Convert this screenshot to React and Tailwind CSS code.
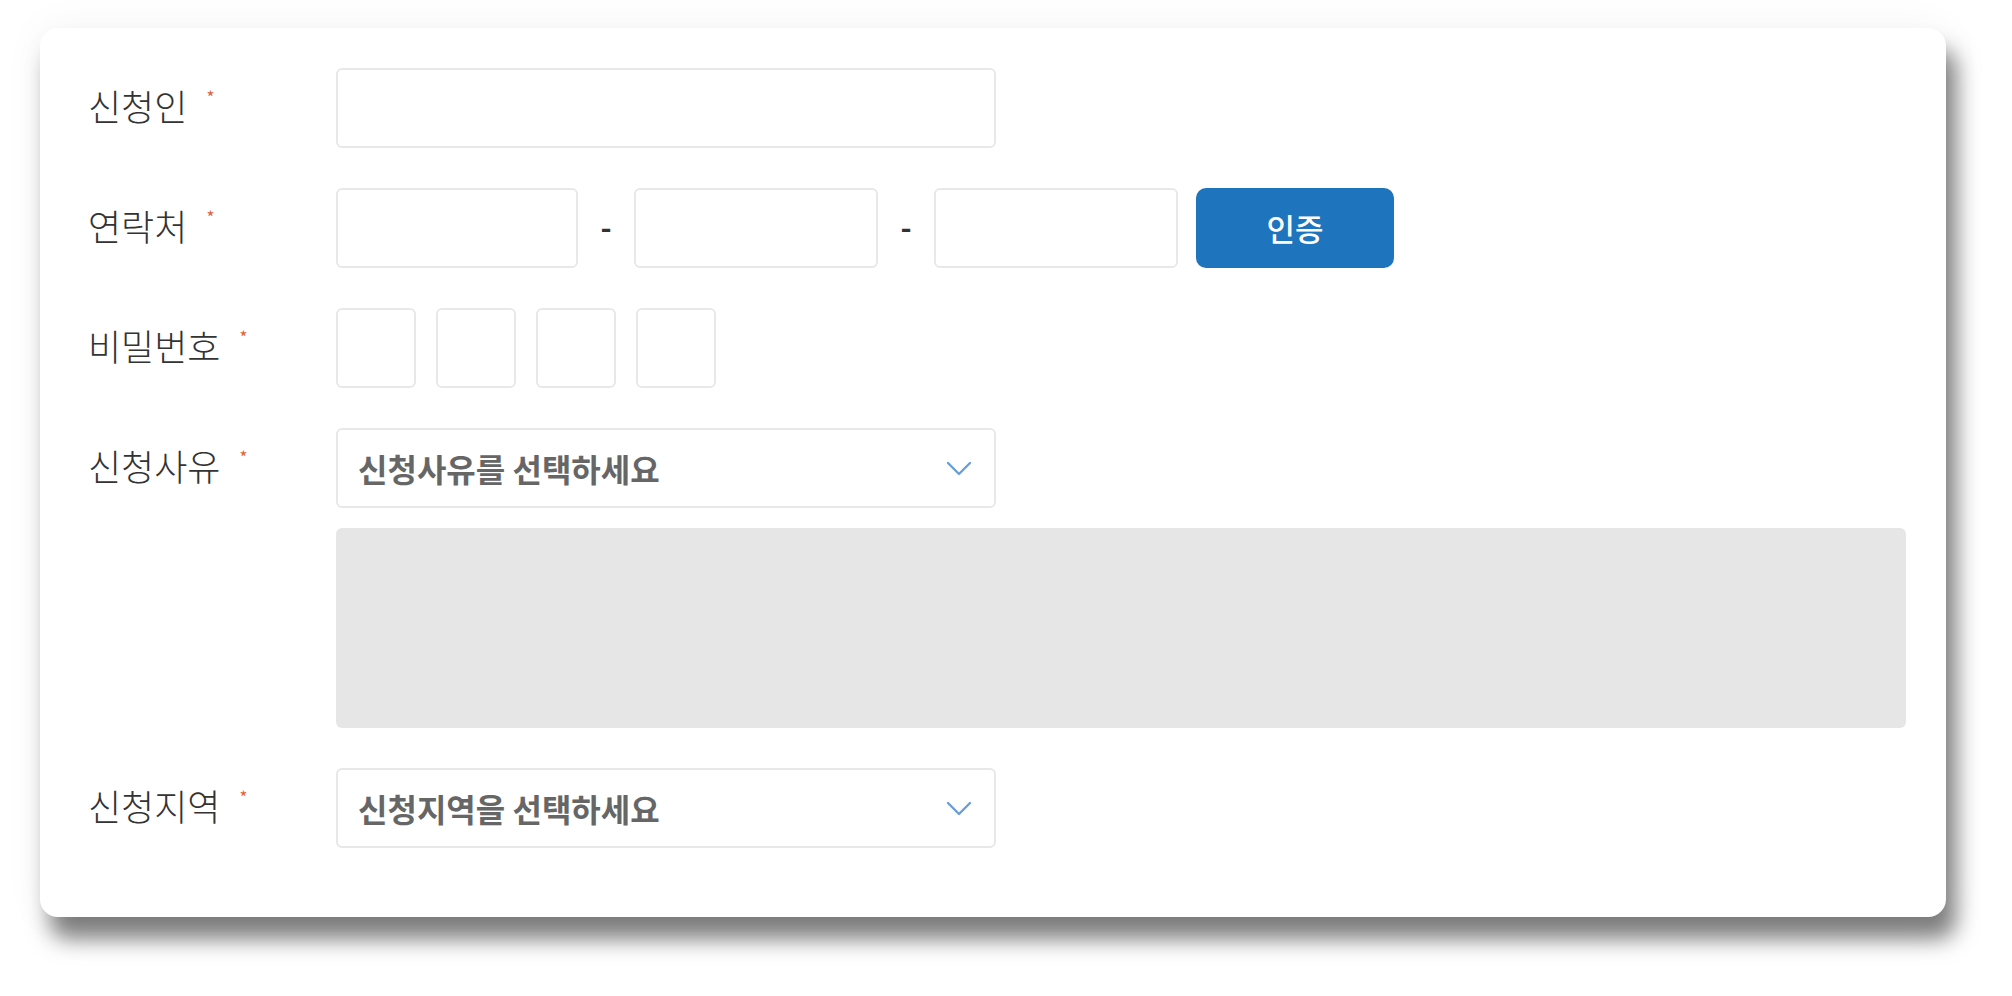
import React from 'react';

const inputCls = 'h-[80px] border-2 border-[#e8e8e8] rounded-[6px] bg-white outline-none';

function Label({ text }) {
  return (
    <div className="w-[248px] h-[80px] flex items-center pb-[6px] shrink-0">
      <span className="text-[36px] font-extralight text-[#333] leading-none">{text}</span>
      <span className="ml-[19px] self-start mt-[20px] text-[17px] leading-none text-[#e4613d]">*</span>
    </div>
  );
}

function Chevron() {
  return (
    <svg width="26" height="17" viewBox="0 0 26 17" fill="none">
      <polyline points="2,3 13,14 24,3" stroke="#6a9fd6" strokeWidth="2.4" strokeLinecap="round" strokeLinejoin="round" />
    </svg>
  );
}

function Select({ placeholder }) {
  return (
    <div className="w-[660px] h-[80px] border-2 border-[#e8e8e8] rounded-[6px] bg-white flex items-center justify-between pl-[20px] pr-[22px]">
      <span className="text-[32px] font-bold text-[#666] leading-none">{placeholder}</span>
      <Chevron />
    </div>
  );
}

export default function App() {
  return (
    <div className="min-h-[996px] bg-white pt-[28px] pl-[40px] font-['Noto_Sans_CJK_KR','Noto_Sans',sans-serif]">
      <div className="w-[1906px] bg-white rounded-[18px] shadow-[10px_22px_22px_rgba(0,0,0,0.5),0_0_40px_rgba(0,0,0,0.05)] pt-[40px] pb-[69px] pl-[48px] pr-[40px] flex flex-col">
        {/* 신청인 */}
        <div className="flex">
          <Label text="신청인" />
          <input className={`${inputCls} w-[660px]`} />
        </div>

        {/* 연락처 */}
        <div className="flex mt-[40px]">
          <Label text="연락처" />
          <div className="flex items-center">
            <input className={`${inputCls} w-[242px]`} />
            <span className="w-[56px] text-center text-[30px] font-bold text-[#333] leading-none pb-[4px]">-</span>
            <input className={`${inputCls} w-[244px]`} />
            <span className="w-[56px] text-center text-[30px] font-bold text-[#333] leading-none pb-[4px]">-</span>
            <input className={`${inputCls} w-[244px]`} />
            <button className="ml-[18px] w-[198px] h-[80px] rounded-[10px] bg-[#1f74be] text-white text-[31px] font-medium">인증</button>
          </div>
        </div>

        {/* 비밀번호 */}
        <div className="flex mt-[40px]">
          <Label text="비밀번호" />
          <div className="flex gap-[20px]">
            <input className={`${inputCls} w-[80px]`} />
            <input className={`${inputCls} w-[80px]`} />
            <input className={`${inputCls} w-[80px]`} />
            <input className={`${inputCls} w-[80px]`} />
          </div>
        </div>

        {/* 신청사유 */}
        <div className="flex mt-[40px]">
          <Label text="신청사유" />
          <div className="flex flex-col gap-[20px] flex-1">
            <Select placeholder="신청사유를 선택하세요" />
            <textarea className="h-[200px] w-full bg-[#e6e6e6] rounded-[6px] resize-none outline-none" />
          </div>
        </div>

        {/* 신청지역 */}
        <div className="flex mt-[40px]">
          <Label text="신청지역" />
          <Select placeholder="신청지역을 선택하세요" />
        </div>
      </div>
    </div>
  );
}
